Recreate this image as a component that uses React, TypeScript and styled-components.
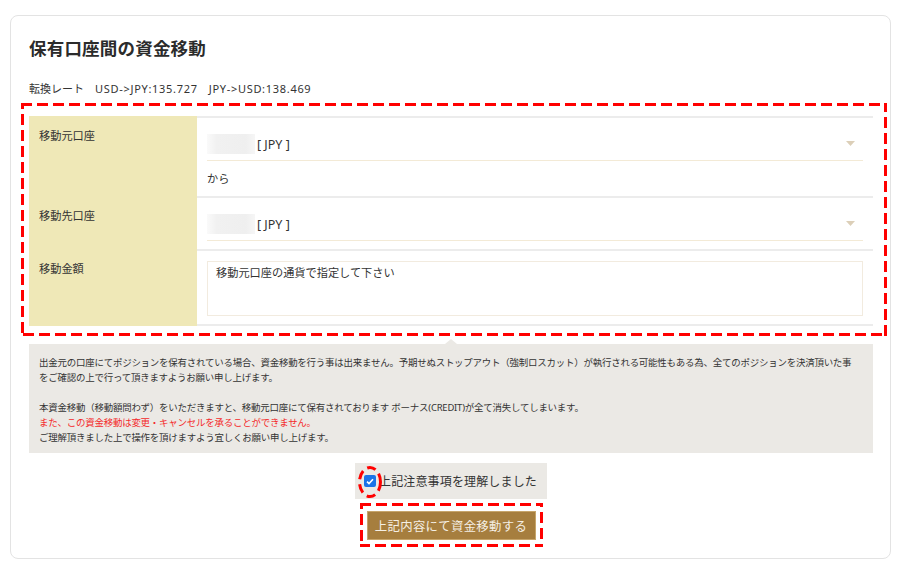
import React from "react";
import styled, { createGlobalStyle } from "styled-components";

const Global = createGlobalStyle`
  html, body { margin: 0; padding: 0; background: #fff; }
  body {
    font-family: "Noto Sans", "Noto Sans CJK JP", sans-serif;
    color: #333;
  }
  * { box-sizing: border-box; }
`;

const Page = styled.div`
  padding: 15px 9px 11px 10px;
`;

const Card = styled.section`
  width: 881px;
  border: 1px solid #e3e3e3;
  border-radius: 8px;
  background: #fff;
  padding: 20px 17px 18px 18px;
`;

const Title = styled.h1`
  margin: 0;
  font-size: 17.5px;
  line-height: 24px;
  font-weight: 700;
  color: #2b2b2b;
  letter-spacing: 0.2px;
`;

const Rate = styled.p`
  margin: 21px 0 0;
  font-size: 11px;
  line-height: 16px;
  color: #333;
  white-space: pre;
`;

const Latin = styled.span`
  letter-spacing: 0.7px;
`;

const Highlight = styled.div`
  position: relative;
  margin-top: 19px;
`;

const DashFrame = styled.svg<{ $t: number; $l: number; $r: number; $b: number }>`
  position: absolute;
  top: ${(p) => -p.$t}px;
  left: ${(p) => -p.$l}px;
  width: calc(100% + ${(p) => p.$l + p.$r}px);
  height: calc(100% + ${(p) => p.$t + p.$b}px);
  pointer-events: none;
  overflow: hidden;
`;

const Table = styled.div`
  display: grid;
  grid-template-columns: 168px 1fr;
  border-top: 2px solid #ececec;
`;

const Label = styled.div<{ $last?: boolean }>`
  background: #efe8b7;
  padding: 11px 10px 9px;
  margin-top: -2px;
  font-size: 11.2px;
  line-height: 18px;
  color: #333;
  border-bottom: 2px solid ${(p) => (p.$last ? "#efe8b7" : "#f6f1d6")};
`;

const Value = styled.div`
  padding: 10px 10px 8px 10px;
  border-bottom: 2px solid #ececec;
  background: #fff;
`;

const SelectBox = styled.div`
  height: 33px;
  display: flex;
  align-items: center;
  border-bottom: 1px solid #f3ead6;
  font-size: 12.5px;
  color: #333;
  position: relative;
  padding-right: 20px;
`;

const Redacted = styled.span<{ $w: number }>`
  display: inline-block;
  width: ${(p) => p.$w}px;
  height: 20px;
  background: linear-gradient(90deg, #fafafa, #f1f1f1 20%, #efefef 80%, #f6f6f6);
  margin-right: 2px;
  filter: blur(0.6px);
`;

const Arrow = styled.svg`
  position: absolute;
  right: 8px;
  top: 13px;
`;

const From = styled.div`
  font-size: 11.2px;
  line-height: 18px;
  padding: 9px 0 0;
  color: #333;
`;

const TextArea = styled.div`
  height: 55px;
  border: 1px solid #f2ebdf;
  padding: 3px 8px;
  font-size: 11.2px;
  line-height: 16px;
  color: #333;
`;

const Notice = styled.div`
  position: relative;
  margin-top: 18px;
  background: #ebe9e5;
  padding: 11px 18px 8px 10px;
  font-size: 9.45px;
  letter-spacing: -0.2px;
  line-height: 15px;
  color: #333;
  &::before {
    content: "";
    position: absolute;
    top: -5px;
    left: 416px;
    border-left: 6px solid transparent;
    border-right: 6px solid transparent;
    border-bottom: 5px solid #ebe9e5;
  }
`;

const Para = styled.p`
  margin: 0;
  & + & { margin-top: 15px; }
`;

const Warn = styled.span`
  color: #f42a2a;
`;

const Actions = styled.div`
  display: flex;
  flex-direction: column;
  align-items: center;
  margin-top: 10px;
  gap: 12px;
`;

const Agree = styled.label`
  position: relative;
  display: flex;
  align-items: center;
  height: 36px;
  background: #ebe9e5;
  padding: 0 10px 0 9px;
  font-size: 12px;
  color: #333;
  letter-spacing: 0.15px;
`;

const Check = styled.span`
  width: 12px;
  height: 12px;
  border-radius: 2px;
  background: #1a73e8;
  display: inline-flex;
  align-items: center;
  justify-content: center;
  margin-right: 3px;
`;

const Ellipse = styled.svg`
  position: absolute;
  left: 3px;
  top: 3px;
  pointer-events: none;
`;

const ButtonWrap = styled.div`
  position: relative;
`;

const Button = styled.button`
  display: block;
  width: 169px;
  height: 29px;
  background: #a67e3e;
  border: 1px solid #c7a56a;
  color: #f5efe4;
  font-family: "Noto Sans", "Noto Sans CJK JP", sans-serif;
  font-size: 12.4px;
  letter-spacing: 0.3px;
  padding: 0;
  cursor: pointer;
`;

const Dashes: React.FC<{ t: number; l: number; r: number; b: number }> = ({ t, l, r, b }) => (
  <DashFrame $t={t} $l={l} $r={r} $b={b}>
    <rect
      x="0"
      y="0"
      width="100%"
      height="100%"
      fill="none"
      stroke="#ff0000"
      strokeWidth="6"
      strokeDasharray="11 5"
    />
  </DashFrame>
);

const Select: React.FC<{ w: number }> = ({ w }) => (
  <SelectBox>
    <Redacted $w={w} />
    <span>[ JPY ]</span>
    <Arrow width="9" height="5" viewBox="0 0 9 5">
      <path d="M0 0 L9 0 L4.5 5 Z" fill="#dccfb8" />
    </Arrow>
  </SelectBox>
);

export default function App() {
  return (
    <Page>
      <Global />
      <Card>
        <Title>保有口座間の資金移動</Title>
        <Rate>
          {"転換レート　"}
          <Latin>USD-&gt;JPY:135.727</Latin>
          {"　"}
          <Latin>JPY-&gt;USD:138.469</Latin>
        </Rate>
        <Highlight>
          <Table>
            <Label>移動元口座</Label>
            <Value>
              <Select w={48} />
              <From>から</From>
            </Value>
            <Label>移動先口座</Label>
            <Value>
              <Select w={48} />
            </Value>
            <Label $last>移動金額</Label>
            <Value>
              <TextArea>移動元口座の通貨で指定して下さい</TextArea>
            </Value>
          </Table>
          <Dashes t={13} l={8} r={14} b={10} />
        </Highlight>
        <Notice>
          <Para>
            出金元の口座にてポジションを保有されている場合、資金移動を行う事は出来ません。予期せぬストップアウト（強制ロスカット）が執行される可能性もある為、全てのポジションを決済頂いた事をご確認の上で行って頂きますようお願い申し上げます。
          </Para>
          <Para>
            本資金移動（移動額問わず）をいただきますと、移動元口座にて保有されております ボーナス(CREDIT)が全て消失してしまいます。
            <br />
            <Warn>また、この資金移動は変更・キャンセルを承ることができません。</Warn>
            <br />
            ご理解頂きました上で操作を頂けますよう宜しくお願い申し上げます。
          </Para>
        </Notice>
        <Actions>
          <Agree>
            <Check>
              <svg width="8" height="7" viewBox="0 0 8 7">
                <path d="M1 3.6 L3 5.5 L7 1.2" stroke="#fff" strokeWidth="1.6" fill="none" />
              </svg>
            </Check>
            上記注意事項を理解しました
            <Ellipse width="24" height="32" viewBox="0 0 24 32">
              <ellipse
                cx="12"
                cy="16"
                rx="10.5"
                ry="14.5"
                fill="none"
                stroke="#ff0000"
                strokeWidth="3"
                strokeDasharray="9 5"
              />
            </Ellipse>
          </Agree>
          <ButtonWrap>
            <Button type="button">上記内容にて資金移動する</Button>
            <Dashes t={8} l={7} r={7} b={7} />
          </ButtonWrap>
        </Actions>
      </Card>
    </Page>
  );
}
